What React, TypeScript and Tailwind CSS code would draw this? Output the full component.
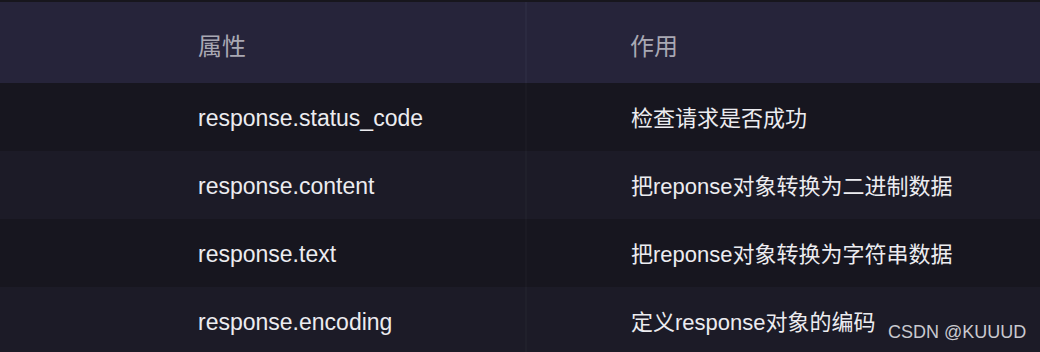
import React from 'react';

const rows = [
  { attr: 'response.status_code', use: '检查请求是否成功' },
  { attr: 'response.content', use: '把reponse对象转换为二进制数据' },
  { attr: 'response.text', use: '把reponse对象转换为字符串数据' },
  { attr: 'response.encoding', use: '定义response对象的编码' },
];

const font = { fontFamily: '"Liberation Sans", "Noto Sans CJK SC", sans-serif' };

const App: React.FC = () => {
  return (
    <div className="w-[1040px] h-[352px] overflow-hidden bg-[#1c1b27] relative" style={font}>
      <div className="h-[2px] bg-[#17161d]" />
      <div className="grid grid-cols-[527px_1fr] h-[81px] bg-[#26243a] items-center text-[24px] text-[#a9a8b3]">
        <div className="pl-[198px] pt-[8px] h-full flex items-center border-r-2 border-[#2b2a40]">属性</div>
        <div className="pl-[103px] pt-[8px] h-full flex items-center">作用</div>
      </div>
      {rows.map((row, i) => (
        <div
          key={row.attr}
          className={`grid grid-cols-[527px_1fr] h-[68px] items-center text-[#ececf0] ${
            i % 2 === 0 ? 'bg-[#17161f]' : 'bg-[#1c1b27]'
          }`}
        >
          <div
            className={`pl-[198px] pt-[3px] h-full flex items-center text-[23px] border-r-2 ${
              i % 2 === 0 ? 'border-[#1b1a23]' : 'border-[#20202b]'
            }`}
          >
            {row.attr}
          </div>
          <div className="pl-[104px] pt-[3px] h-full flex items-center text-[22px]">{row.use}</div>
        </div>
      ))}
      <div className="absolute left-[888px] top-[319px] text-[18px] text-[#c9c9cf]">CSDN @KUUUD</div>
    </div>
  );
};

export default App;
